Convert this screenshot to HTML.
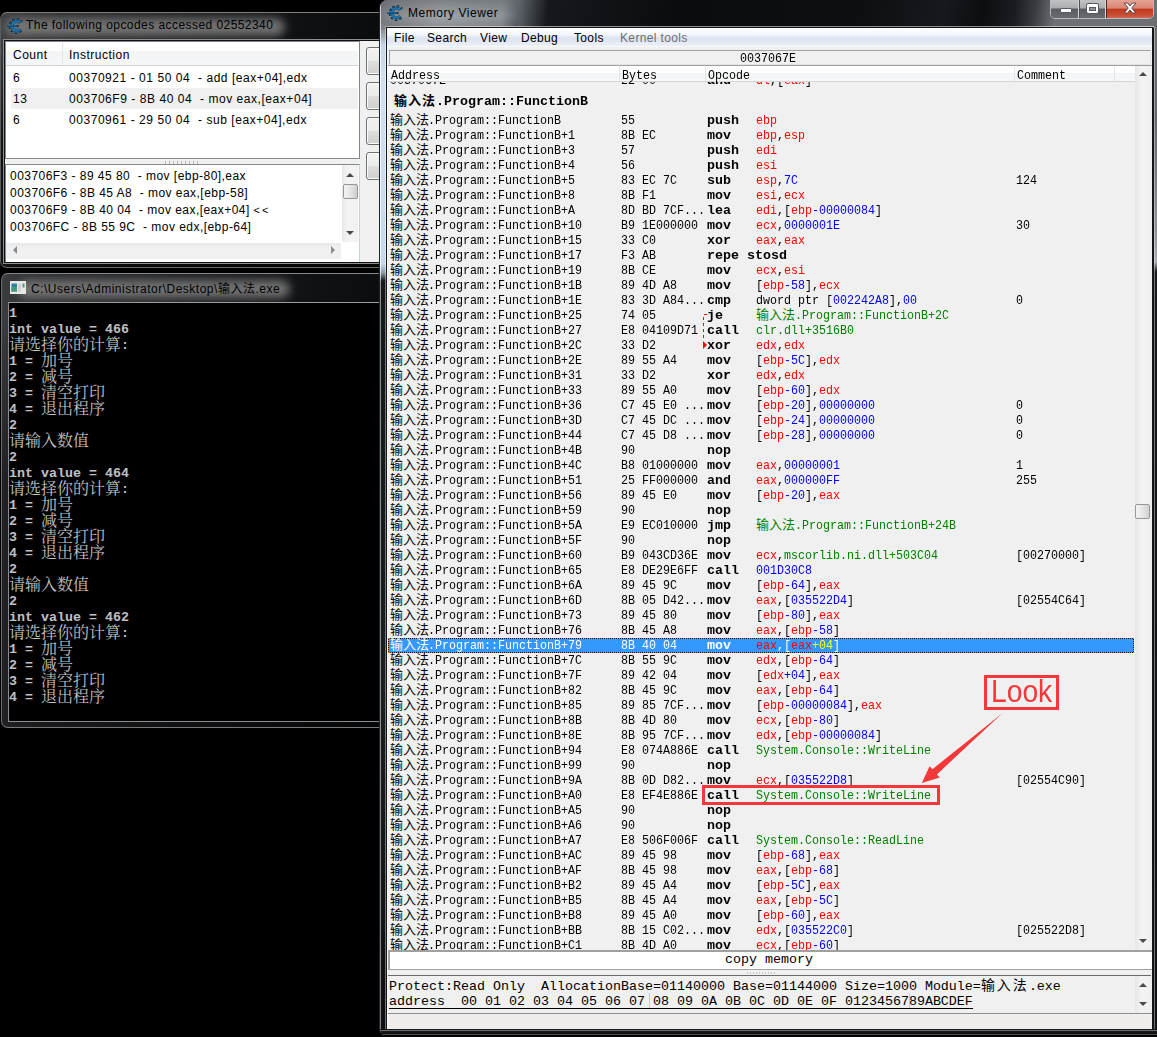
<!DOCTYPE html>
<html lang="zh">
<head>
<meta charset="utf-8">
<title>Memory Viewer</title>
<style>
*{box-sizing:border-box;margin:0;padding:0}
html,body{width:1157px;height:1037px;overflow:hidden;background:#000}
body{position:relative;font-family:"Liberation Sans","Noto Sans CJK SC",sans-serif;font-size:12px;color:#000}
.abs{position:absolute}
/* ---------- window 1 : opcodes ---------- */
#w1{position:absolute;left:0;top:12px;width:379px;height:256px;border-radius:7px 0 0 7px;overflow:hidden;
 background:linear-gradient(rgba(0,0,0,0) 0,rgba(0,0,0,0) 30px,rgba(0,0,0,.7) 130px),linear-gradient(90deg,#3e3f42 0,#2c2d2f 40px,#101113 290px,#0b0c0e 100%);
 border-top:1px solid #7d7f81;border-left:1px solid #5a5c5f;border-bottom:1px solid #6a6c6e}
#w1 .glow{position:absolute;left:4px;top:5px;width:280px;height:18px;border-radius:9px;background:#7c7c7c;filter:blur(5px);opacity:.9}
.ttl{position:absolute;white-space:nowrap;font-size:12px;color:#000}
#w1c{position:absolute;left:3px;top:27px;width:400px;height:223px;background:#f0f0f0;border:1px solid #101114;box-shadow:0 0 0 1px #8c8e90;overflow:hidden}
.lv{position:absolute;background:#fff;border:1px solid #828790}
.lvh{position:absolute;left:1px;top:0;height:24px;background:linear-gradient(#fff 0,#fff 40%,#f3f4f6 41%,#f6f7f9 100%);border-bottom:1px solid #d5d5d5}
.t12{position:absolute;white-space:pre;font-size:12px;line-height:16px;letter-spacing:.6px}
.ls{letter-spacing:.55px}.ls2{letter-spacing:.46px}
.btn{position:absolute;left:361px;width:40px;height:28px;border:1px solid #707070;border-radius:3px;
 background:linear-gradient(#f2f2f2 0,#ebebeb 48%,#dddddd 52%,#cfcfcf 100%);box-shadow:inset 0 0 0 1px #fcfcfc}
.sb{position:absolute;background:#f0f0f0}
.arr{position:absolute;width:0;height:0}
/* ---------- window 2 : console ---------- */
#w2{position:absolute;left:1px;top:273px;width:378px;height:455px;border-radius:7px 0 0 7px;overflow:hidden;
 background:linear-gradient(rgba(0,0,0,0) 0,rgba(0,0,0,0) 40px,rgba(0,0,0,.45) 200px),linear-gradient(90deg,#3c3d40 0,#2c2d2f 40px,#111214 300px,#0c0d0f 100%);
 border-top:1px solid #85878a;border-left:1px solid #6c6e70;border-bottom:1px solid #77797b}
#w2 .glow{position:absolute;left:16px;top:6px;width:272px;height:18px;border-radius:9px;background:#7c7c7c;filter:blur(5px);opacity:.9}
#con{position:absolute;left:6px;top:28px;width:400px;height:420px;background:#000;border:1px solid #8a8c8e;border-top-color:#9a9c9e}
.cl{position:absolute;left:0;height:16px;font-family:"Liberation Mono",monospace;font-weight:bold;font-size:13.33px;line-height:16px;color:#c0c0c0;white-space:pre}
.cl .c{display:inline-block;vertical-align:top;position:relative;top:-2px;height:16px;font-family:"Noto Serif CJK SC","Noto Sans CJK SC",serif;font-weight:400;font-size:16px;line-height:16px}
/* ---------- window 3 : memory viewer ---------- */
#w3{position:absolute;left:379px;top:0;width:780px;height:1036px;border-radius:8px 0 0 7px;
 background:#15181b;border-left:1px solid #1f242a;overflow:hidden}
#w3 .tb{position:absolute;left:0;top:0;width:100%;height:28px;
 background:linear-gradient(97deg,#767a7e 0,#868a8f 14px,#a0a4a8 60px,#90969b 122px,#5a5f65 140px,#15181c 168px,#0a0c0f 300px,#0d0f12 480px,#16191d 560px,#0c0e11 600px,#1a1d21 632px,#3a3e42 652px,#6d7174 672px,#6d7174 100%)}
#w3 .tb3{position:absolute;left:6px;top:26px;width:769px;height:1px;background:linear-gradient(90deg,rgba(255,255,255,.45),rgba(255,255,255,.55) 130px,rgba(255,255,255,.5) 600px,rgba(255,255,255,.6))}
#w3 .tb2{position:absolute;left:0;top:0;width:138px;height:28px;
 background:linear-gradient(rgba(90,94,98,.5) 0,rgba(0,0,0,0) 55%,rgba(0,0,0,.12) 100%)}
#w3 .lf{position:absolute;left:0;top:0;width:7px;height:1036px;
 background:linear-gradient(rgba(0,0,0,0) 0,rgba(0,0,0,0) 22px,#8d9298 30px,#a3adb8 37px,#c3d7ea 45px,#cfe0f1 80px,#c6d9ec 264px,#8b97a3 273px,#15181b 281px,#1b1e21 700px,#0d0e10 100%)}
#w3 .lf2{position:absolute;left:0;top:4px;width:1px;height:1032px;background:linear-gradient(rgba(255,255,255,.6) 0,rgba(255,255,255,.75) 40px,rgba(255,255,255,.75) 266px,rgba(255,255,255,.5) 280px,rgba(255,255,255,.5) 100%)}
#w3 .lf3{position:absolute;left:5px;top:27px;width:1px;height:1003px;background:linear-gradient(rgba(255,255,255,.35) 0,rgba(255,255,255,.5) 20px,rgba(255,255,255,.5) 240px,rgba(255,255,255,.4) 254px,rgba(255,255,255,.4) 100%)}
#w3 .rf{position:absolute;left:774px;top:0;width:6px;height:1036px;
 background:linear-gradient(#6d7174 0,#63676b 120px,#8d9195 230px,#a9adb1 262px,#181b1e 272px,#101214 100%)}
#w3 .rf2{position:absolute;left:774px;top:27px;width:1px;height:1003px;background:rgba(255,255,255,.4)}
#w3 .bf{position:absolute;left:0;top:1029px;width:780px;height:7px;background:linear-gradient(#101214 0,#101214 1px,#6a6c6e 1px,#6a6c6e 2px,#1a1c1e 2px,#0c0d0e 5px,#4a4c4e 5px,#4a4c4e 6px,#000 6px)}
#mv{position:absolute;left:7px;top:28px;width:765px;height:1001px;background:#f0f0f0}
#menu{position:absolute;left:0;top:0;width:765px;height:19px;background:linear-gradient(#fff 0,#f4f6fb 35%,#dde3f1 55%,#e4e8f4 80%,#eef1f8 100%);border-bottom:1px solid #f8f9fc}
#menu span{position:absolute;top:2px;font-size:12px;line-height:16px;letter-spacing:.35px;white-space:nowrap}
.mono{position:absolute;font-family:"Liberation Mono",monospace;font-size:13px;line-height:15px;white-space:pre;transform:scaleX(.8974);transform-origin:0 0}
#dis{position:absolute;left:1px;top:54px;width:747px;height:868px;overflow:hidden;background:#f0f0f0}
.row{position:absolute;left:0;width:745px;height:15px;color:#000}
.l{position:absolute;top:1px;font-family:"Liberation Mono",monospace;font-size:13px;line-height:15px;white-space:pre;transform:scaleX(.8974);transform-origin:0 0}
b.l{transform:scaleX(1.0256)}
.cj{position:absolute;top:-1px;font-family:"Noto Sans CJK SC","Noto Serif CJK SC",sans-serif;font-size:13px;line-height:15px;white-space:pre}
.by{left:233px}.op{left:319px}.opr{left:368px}.com{left:628px}
.r{color:#f00}.h{color:#00f}.g{color:#008000}
.sel{color:#fff}
.selbg{position:absolute;left:0;top:556px;width:746px;height:15px;background:#111}
.selbg i{position:absolute;left:0;top:0;width:746px;height:15px;background:#3399ff;background-clip:padding-box;border:1px dotted #f0860e}
.sel .h{color:#ff0}
#hex{position:absolute;left:1px;top:947px;width:763px;height:39px;background:#f0f0f0;border-top:1px solid #696969}
.cn{font-family:"Liberation Mono","Noto Sans CJK SC",monospace;font-size:13.33px;line-height:15px;white-space:pre;position:absolute;letter-spacing:0}
</style>
</head>
<body>

<!-- ================= opcodes window ================= -->
<div id="w1">
  <div class="glow"></div>
  <svg class="abs" style="left:6px;top:4px" width="17" height="18" viewBox="0 0 17 18"><path d="M14.56 5.12A6.30 6.30 0 1 0 14.56 12.88" fill="none" stroke="#04101a" stroke-width="3" stroke-dasharray="2.1 1.9" stroke-dashoffset="0.7"/><path d="M14.56 5.12A6.30 6.30 0 1 0 14.56 12.88" fill="none" stroke="#1878b8" stroke-width="1.6" stroke-dasharray="1.5 2.5" stroke-dashoffset="0.4"/><path d="M13.20 5.98A4.70 4.70 0 1 0 13.20 12.02" fill="none" stroke="#04101a" stroke-width="3" opacity=".5"/><path d="M13.20 5.98A4.70 4.70 0 1 0 13.20 12.02" fill="none" stroke="#1878b8" stroke-width="2.1"/><path d="M0.4 9H11.4" stroke="#04101a" stroke-width="1.9" opacity=".85"/><path d="M0.6 8.9H10" stroke="#1878b8" stroke-width="1.3"/></svg>
  <div class="ttl" style="left:25px;top:5px;letter-spacing:.44px">The following opcodes accessed 02552340</div>
  <div id="w1c">
    <div class="lv" style="left:0;top:0;width:355px;height:118px">
      <div class="lvh" style="left:0;width:352px"></div>
      <div class="abs" style="left:56px;top:1px;width:1px;height:22px;background:#e2e3e5"></div>
      <div class="t12" style="left:7px;top:5px;letter-spacing:.5px">Count</div>
      <div class="t12" style="left:63px;top:5px;letter-spacing:.5px">Instruction</div>
      <div class="abs" style="left:5px;top:46px;width:347px;height:21px;background:#f0f0f0"></div>
      <div class="t12" style="left:7px;top:28px">6</div>
      <div class="t12 ls" style="left:63px;top:28px">00370921 - 01 50 04&nbsp; - add [eax+04],edx</div>
      <div class="t12" style="left:7px;top:49px">13</div>
      <div class="t12 ls" style="left:63px;top:49px">003706F9 - 8B 40 04&nbsp; - mov eax,[eax+04]</div>
      <div class="t12" style="left:7px;top:70px">6</div>
      <div class="t12 ls" style="left:63px;top:70px">00370961 - 29 50 04&nbsp; - sub [eax+04],edx</div>
    </div>
    <div class="abs" style="left:160px;top:120px;width:34px;height:3px;background:repeating-linear-gradient(90deg,#b8b8b8 0,#b8b8b8 1px,#f0f0f0 1px,#f0f0f0 4px)"></div>
    <div class="lv" style="left:0;top:123px;width:355px;height:110px;border-color:#828790 #c5d0e0 #828790 #828790">
      <div class="t12 ls2" style="left:4px;top:3px">003706F3 - 89 45 80&nbsp; - mov [ebp-80],eax</div>
      <div class="t12 ls2" style="left:4px;top:20px">003706F6 - 8B 45 A8&nbsp; - mov eax,[ebp-58]</div>
      <div class="t12 ls2" style="left:4px;top:37px">003706F9 - 8B 40 04&nbsp; - mov eax,[eax+04] <span style="letter-spacing:2px;font-size:11px">&lt;&lt;</span></div>
      <div class="t12 ls2" style="left:4px;top:54px">003706FC - 8B 55 9C&nbsp; - mov edx,[ebp-64]</div>
      <!-- v scrollbar -->
      <div class="sb" style="left:336px;top:0;width:16px;height:77px;background:linear-gradient(90deg,#e8e8e8,#f4f4f4 40%,#f0f0f0)"></div>
      <div class="arr" style="left:340px;top:8px;border-left:4px solid transparent;border-right:4px solid transparent;border-bottom:4px solid #4a4a4a"></div>
      <div class="abs" style="left:337px;top:19px;width:15px;height:15px;border:1px solid #979797;border-radius:2px;background:linear-gradient(90deg,#f4f4f4,#e4e4e4 50%,#cfcfcf)"></div>
      <div class="arr" style="left:340px;top:66px;border-left:4px solid transparent;border-right:4px solid transparent;border-top:4px solid #4a4a4a"></div>
      <!-- h scrollbar -->
      <div class="sb" style="left:0;top:78px;width:335px;height:16px;background:linear-gradient(#e9e9e9,#f1f1f1 40%,#efefef)"></div>
      <div class="arr" style="left:7px;top:81px;border-top:4px solid transparent;border-bottom:4px solid transparent;border-right:4px solid #8a8a8a"></div>
      <div class="arr" style="left:325px;top:81px;border-top:4px solid transparent;border-bottom:4px solid transparent;border-left:4px solid #8a8a8a"></div>
    </div>
    <div class="btn" style="top:6px"></div>
    <div class="btn" style="top:41px"></div>
    <div class="btn" style="top:76px"></div>
    <div class="btn" style="top:111px"></div>
  </div>
</div>

<!-- ================= console window ================= -->
<div id="w2">
  <div class="glow"></div>
  <svg class="abs" style="left:8px;top:7px" width="16" height="13" viewBox="0 0 16 13"><rect x="0" y="0" width="16" height="13" fill="#e8e8e8"/><rect x="1.5" y="2.5" width="5.5" height="8" fill="#2f7fa0"/><rect x="1.5" y="6" width="5.5" height="4.5" fill="#3f9a78"/><rect x="8" y="2.5" width="3" height="8" fill="#d0d0d0"/><rect x="12.5" y="2.5" width="2" height="4" fill="#49a06a"/></svg>
  <div class="ttl" style="left:29px;top:5px;letter-spacing:.5px">C:\Users\Administrator\Desktop\输入法.exe</div>
  <div id="con">
<div class="cl" style="top:3px">1</div>
<div class="cl" style="top:19px">int value = 466</div>
<div class="cl" style="top:35px"><span class="c">请选择你的计算</span>:</div>
<div class="cl" style="top:51px">1 = <span class="c">加号</span></div>
<div class="cl" style="top:67px">2 = <span class="c">减号</span></div>
<div class="cl" style="top:83px">3 = <span class="c">清空打印</span></div>
<div class="cl" style="top:99px">4 = <span class="c">退出程序</span></div>
<div class="cl" style="top:115px">2</div>
<div class="cl" style="top:131px"><span class="c">请输入数值</span></div>
<div class="cl" style="top:147px">2</div>
<div class="cl" style="top:163px">int value = 464</div>
<div class="cl" style="top:179px"><span class="c">请选择你的计算</span>:</div>
<div class="cl" style="top:195px">1 = <span class="c">加号</span></div>
<div class="cl" style="top:211px">2 = <span class="c">减号</span></div>
<div class="cl" style="top:227px">3 = <span class="c">清空打印</span></div>
<div class="cl" style="top:243px">4 = <span class="c">退出程序</span></div>
<div class="cl" style="top:259px">2</div>
<div class="cl" style="top:275px"><span class="c">请输入数值</span></div>
<div class="cl" style="top:291px">2</div>
<div class="cl" style="top:307px">int value = 462</div>
<div class="cl" style="top:323px"><span class="c">请选择你的计算</span>:</div>
<div class="cl" style="top:339px">1 = <span class="c">加号</span></div>
<div class="cl" style="top:355px">2 = <span class="c">减号</span></div>
<div class="cl" style="top:371px">3 = <span class="c">清空打印</span></div>
<div class="cl" style="top:387px">4 = <span class="c">退出程序</span></div>
</div>
</div>

<!-- ================= memory viewer ================= -->
<div id="w3">
  <div class="tb"></div><div class="tb2"></div><div class="tb3"></div>
  <div class="lf"></div><div class="lf2"></div><div class="lf3"></div><div class="rf"></div><div class="rf2"></div><div class="bf"></div>
  <svg class="abs" style="left:7px;top:4px" width="17" height="18" viewBox="0 0 17 18"><path d="M14.56 5.12A6.30 6.30 0 1 0 14.56 12.88" fill="none" stroke="#04101a" stroke-width="3" stroke-dasharray="2.1 1.9" stroke-dashoffset="0.7"/><path d="M14.56 5.12A6.30 6.30 0 1 0 14.56 12.88" fill="none" stroke="#1878b8" stroke-width="1.6" stroke-dasharray="1.5 2.5" stroke-dashoffset="0.4"/><path d="M13.20 5.98A4.70 4.70 0 1 0 13.20 12.02" fill="none" stroke="#04101a" stroke-width="3" opacity=".5"/><path d="M13.20 5.98A4.70 4.70 0 1 0 13.20 12.02" fill="none" stroke="#1878b8" stroke-width="2.1"/><path d="M0.4 9H11.4" stroke="#04101a" stroke-width="1.9" opacity=".85"/><path d="M0.6 8.9H10" stroke="#1878b8" stroke-width="1.3"/></svg>
  <div class="ttl" style="left:28px;top:6px;letter-spacing:.55px">Memory Viewer</div>
  <!-- caption buttons -->
  <div class="abs" style="left:670px;top:-2px;width:104px;height:21px;border:1px solid #b9bcbf;border-radius:0 0 5px 5px;overflow:hidden;background:#555">
    <div class="abs" style="left:0;top:0;width:28px;height:20px;background:linear-gradient(#c3c6c8 0,#a9adb0 45%,#595d61 50%,#6a6e72 100%);border-right:1px solid #d4d6d8"></div>
    <div class="abs" style="left:28px;top:0;width:27px;height:20px;background:linear-gradient(#c3c6c8 0,#a9adb0 45%,#595d61 50%,#6a6e72 100%);border-right:1px solid #d4d6d8;border-left:1px solid #4c4f52"></div>
    <div class="abs" style="left:55px;top:0;width:48px;height:20px;background:linear-gradient(#e8a79b 0,#d98573 45%,#c1391d 52%,#c9513a 85%,#d8796a 100%);border-left:1px solid #5a2018"></div>
    <div class="abs" style="left:9px;top:9px;width:12px;height:5px;background:#fff;border:1px solid #555b61;border-radius:1px"></div>
    <div class="abs" style="left:36px;top:5px;width:11px;height:9px;border:2px solid #fff;border-top-width:3px;outline:1px solid #555b61;border-radius:1px;background:#8e9296;box-shadow:inset 0 0 0 1px #555b61"></div>
    <svg class="abs" style="left:72px;top:3px" width="14" height="12" viewBox="0 0 14 12"><path d="M1.2 1H4.6L7 4 9.4 1H12.8L8.8 6 12.8 11H9.4L7 8 4.6 11H1.2L5.2 6Z" fill="#fff" stroke="#5a4a4c" stroke-width="1"/></svg>
  </div>
  <div id="mv">
    <div class="abs" style="left:-1px;top:-1px;width:767px;height:1003px;border:1px solid #141516"></div>
    <div class="abs" style="left:0;top:19px;width:1px;height:982px;background:#fafafa"></div>
    <div id="menu">
      <span style="left:7px">File</span><span style="left:40px">Search</span><span style="left:93px">View</span><span style="left:134px">Debug</span><span style="left:187px">Tools</span><span style="left:233px;color:#6d6d6d">Kernel tools</span>
    </div>
    <!-- address box -->
    <div class="abs" style="left:2px;top:22px;width:762px;height:15px;border:1px solid #a0a0a0;border-bottom-color:#e3e3e3;border-right-color:#e3e3e3;background:#f0f0f0"></div>
    <div class="mono" style="left:353px;top:23px;line-height:15px">0037067E</div>
    <div class="abs" style="left:1px;top:37px;width:764px;height:1px;background:#a0a0a0"></div>
    <!-- list header -->
    <div class="abs" style="left:1px;top:38px;width:747px;height:16px;background:linear-gradient(#fff 0,#fff 45%,#f3f4f6 50%,#f7f8fa 100%);border-bottom:1px solid #d5d5d5"></div>
    <div class="abs" style="left:232px;top:39px;width:1px;height:14px;background:#e2e3e5"></div>
    <div class="abs" style="left:318px;top:39px;width:1px;height:14px;background:#e2e3e5"></div>
    <div class="abs" style="left:627px;top:39px;width:1px;height:14px;background:#e2e3e5"></div>
    <div class="abs" style="left:727px;top:39px;width:1px;height:14px;background:#e2e3e5"></div>
    <div class="mono" style="left:4px;top:40px;line-height:15px">Address</div>
    <div class="mono" style="left:235px;top:40px;line-height:15px">Bytes</div>
    <div class="mono" style="left:321px;top:40px;line-height:15px">Opcode</div>
    <div class="mono" style="left:630px;top:40px;line-height:15px">Comment</div>
    <!-- v scrollbar -->
    <div class="abs" style="left:748px;top:38px;width:16px;height:884px;background:linear-gradient(90deg,#e6e6e6,#f3f3f3 40%,#efefef)"></div>
    <div class="arr" style="left:752px;top:44px;border-left:4px solid transparent;border-right:4px solid transparent;border-bottom:4px solid #4a4a4a"></div>
    <div class="arr" style="left:752px;top:911px;border-left:4px solid transparent;border-right:4px solid transparent;border-top:4px solid #4a4a4a"></div>
    <div class="abs" style="left:748px;top:476px;width:15px;height:15px;border:1px solid #979797;border-radius:2px;background:linear-gradient(90deg,#f4f4f4,#e6e6e6 50%,#d2d2d2)"></div>
    <!-- disassembly -->
    <div id="dis">
      <div class="selbg"><i></i></div>
      <div class="row" style="top:-10px"><span class="l" style="left:2px">0037067E</span><span class="l by">22 00</span><b class="l op">and</b><span class="l opr"><span class="r">dl</span>,[<span class="r">eax</span>]</span></div>
      <div class="row" style="top:11px"><b class="cj" style="left:6px;font-weight:bold;letter-spacing:1px">输入法</b><b class="l" style="left:48px">.Program::FunctionB</b></div>
<div class="row" style="top:30px"><span class="cj" style="left:2px">输入法</span><span class="l" style="left:40px">.Program::FunctionB</span><span class="l by">55</span><b class="l op">push</b><span class="l opr"><span class="r">ebp</span></span></div>
<div class="row" style="top:45px"><span class="cj" style="left:2px">输入法</span><span class="l" style="left:40px">.Program::FunctionB+1</span><span class="l by">8B EC</span><b class="l op">mov</b><span class="l opr"><span class="r">ebp</span>,<span class="r">esp</span></span></div>
<div class="row" style="top:60px"><span class="cj" style="left:2px">输入法</span><span class="l" style="left:40px">.Program::FunctionB+3</span><span class="l by">57</span><b class="l op">push</b><span class="l opr"><span class="r">edi</span></span></div>
<div class="row" style="top:75px"><span class="cj" style="left:2px">输入法</span><span class="l" style="left:40px">.Program::FunctionB+4</span><span class="l by">56</span><b class="l op">push</b><span class="l opr"><span class="r">esi</span></span></div>
<div class="row" style="top:90px"><span class="cj" style="left:2px">输入法</span><span class="l" style="left:40px">.Program::FunctionB+5</span><span class="l by">83 EC 7C</span><b class="l op">sub</b><span class="l opr"><span class="r">esp</span>,<span class="h">7C</span></span><span class="l com">124</span></div>
<div class="row" style="top:105px"><span class="cj" style="left:2px">输入法</span><span class="l" style="left:40px">.Program::FunctionB+8</span><span class="l by">8B F1</span><b class="l op">mov</b><span class="l opr"><span class="r">esi</span>,<span class="r">ecx</span></span></div>
<div class="row" style="top:120px"><span class="cj" style="left:2px">输入法</span><span class="l" style="left:40px">.Program::FunctionB+A</span><span class="l by">8D BD 7CF...</span><b class="l op">lea</b><span class="l opr"><span class="r">edi</span>,[<span class="r">ebp</span><span class="h">-</span><span class="h">00000084</span>]</span></div>
<div class="row" style="top:135px"><span class="cj" style="left:2px">输入法</span><span class="l" style="left:40px">.Program::FunctionB+10</span><span class="l by">B9 1E000000</span><b class="l op">mov</b><span class="l opr"><span class="r">ecx</span>,<span class="h">0000001E</span></span><span class="l com">30</span></div>
<div class="row" style="top:150px"><span class="cj" style="left:2px">输入法</span><span class="l" style="left:40px">.Program::FunctionB+15</span><span class="l by">33 C0</span><b class="l op">xor</b><span class="l opr"><span class="r">eax</span>,<span class="r">eax</span></span></div>
<div class="row" style="top:165px"><span class="cj" style="left:2px">输入法</span><span class="l" style="left:40px">.Program::FunctionB+17</span><span class="l by">F3 AB</span><b class="l op">repe stosd</b></div>
<div class="row" style="top:180px"><span class="cj" style="left:2px">输入法</span><span class="l" style="left:40px">.Program::FunctionB+19</span><span class="l by">8B CE</span><b class="l op">mov</b><span class="l opr"><span class="r">ecx</span>,<span class="r">esi</span></span></div>
<div class="row" style="top:195px"><span class="cj" style="left:2px">输入法</span><span class="l" style="left:40px">.Program::FunctionB+1B</span><span class="l by">89 4D A8</span><b class="l op">mov</b><span class="l opr">[<span class="r">ebp</span><span class="h">-</span><span class="h">58</span>],<span class="r">ecx</span></span></div>
<div class="row" style="top:210px"><span class="cj" style="left:2px">输入法</span><span class="l" style="left:40px">.Program::FunctionB+1E</span><span class="l by">83 3D A84...</span><b class="l op">cmp</b><span class="l opr">dword ptr [<span class="h">002242A8</span>],<span class="h">00</span></span><span class="l com">0</span></div>
<div class="row" style="top:225px"><span class="cj" style="left:2px">输入法</span><span class="l" style="left:40px">.Program::FunctionB+25</span><span class="l by">74 05</span><b class="l op">je</b><span class="cj g" style="left:368px">输入法</span><span class="l g" style="left:407px">.Program::FunctionB+2C</span></div>
<div class="row" style="top:240px"><span class="cj" style="left:2px">输入法</span><span class="l" style="left:40px">.Program::FunctionB+27</span><span class="l by">E8 04109D71</span><b class="l op">call</b><span class="l opr"><span class="g">clr.dll+3516B0</span></span></div>
<div class="row" style="top:255px"><span class="cj" style="left:2px">输入法</span><span class="l" style="left:40px">.Program::FunctionB+2C</span><span class="l by">33 D2</span><b class="l op">xor</b><span class="l opr"><span class="r">edx</span>,<span class="r">edx</span></span></div>
<div class="row" style="top:270px"><span class="cj" style="left:2px">输入法</span><span class="l" style="left:40px">.Program::FunctionB+2E</span><span class="l by">89 55 A4</span><b class="l op">mov</b><span class="l opr">[<span class="r">ebp</span><span class="h">-</span><span class="h">5C</span>],<span class="r">edx</span></span></div>
<div class="row" style="top:285px"><span class="cj" style="left:2px">输入法</span><span class="l" style="left:40px">.Program::FunctionB+31</span><span class="l by">33 D2</span><b class="l op">xor</b><span class="l opr"><span class="r">edx</span>,<span class="r">edx</span></span></div>
<div class="row" style="top:300px"><span class="cj" style="left:2px">输入法</span><span class="l" style="left:40px">.Program::FunctionB+33</span><span class="l by">89 55 A0</span><b class="l op">mov</b><span class="l opr">[<span class="r">ebp</span><span class="h">-</span><span class="h">60</span>],<span class="r">edx</span></span></div>
<div class="row" style="top:315px"><span class="cj" style="left:2px">输入法</span><span class="l" style="left:40px">.Program::FunctionB+36</span><span class="l by">C7 45 E0 ...</span><b class="l op">mov</b><span class="l opr">[<span class="r">ebp</span><span class="h">-</span><span class="h">20</span>],<span class="h">00000000</span></span><span class="l com">0</span></div>
<div class="row" style="top:330px"><span class="cj" style="left:2px">输入法</span><span class="l" style="left:40px">.Program::FunctionB+3D</span><span class="l by">C7 45 DC ...</span><b class="l op">mov</b><span class="l opr">[<span class="r">ebp</span><span class="h">-</span><span class="h">24</span>],<span class="h">00000000</span></span><span class="l com">0</span></div>
<div class="row" style="top:345px"><span class="cj" style="left:2px">输入法</span><span class="l" style="left:40px">.Program::FunctionB+44</span><span class="l by">C7 45 D8 ...</span><b class="l op">mov</b><span class="l opr">[<span class="r">ebp</span><span class="h">-</span><span class="h">28</span>],<span class="h">00000000</span></span><span class="l com">0</span></div>
<div class="row" style="top:360px"><span class="cj" style="left:2px">输入法</span><span class="l" style="left:40px">.Program::FunctionB+4B</span><span class="l by">90</span><b class="l op">nop</b></div>
<div class="row" style="top:375px"><span class="cj" style="left:2px">输入法</span><span class="l" style="left:40px">.Program::FunctionB+4C</span><span class="l by">B8 01000000</span><b class="l op">mov</b><span class="l opr"><span class="r">eax</span>,<span class="h">00000001</span></span><span class="l com">1</span></div>
<div class="row" style="top:390px"><span class="cj" style="left:2px">输入法</span><span class="l" style="left:40px">.Program::FunctionB+51</span><span class="l by">25 FF000000</span><b class="l op">and</b><span class="l opr"><span class="r">eax</span>,<span class="h">000000FF</span></span><span class="l com">255</span></div>
<div class="row" style="top:405px"><span class="cj" style="left:2px">输入法</span><span class="l" style="left:40px">.Program::FunctionB+56</span><span class="l by">89 45 E0</span><b class="l op">mov</b><span class="l opr">[<span class="r">ebp</span><span class="h">-</span><span class="h">20</span>],<span class="r">eax</span></span></div>
<div class="row" style="top:420px"><span class="cj" style="left:2px">输入法</span><span class="l" style="left:40px">.Program::FunctionB+59</span><span class="l by">90</span><b class="l op">nop</b></div>
<div class="row" style="top:435px"><span class="cj" style="left:2px">输入法</span><span class="l" style="left:40px">.Program::FunctionB+5A</span><span class="l by">E9 EC010000</span><b class="l op">jmp</b><span class="cj g" style="left:368px">输入法</span><span class="l g" style="left:407px">.Program::FunctionB+24B</span></div>
<div class="row" style="top:450px"><span class="cj" style="left:2px">输入法</span><span class="l" style="left:40px">.Program::FunctionB+5F</span><span class="l by">90</span><b class="l op">nop</b></div>
<div class="row" style="top:465px"><span class="cj" style="left:2px">输入法</span><span class="l" style="left:40px">.Program::FunctionB+60</span><span class="l by">B9 043CD36E</span><b class="l op">mov</b><span class="l opr"><span class="r">ecx</span>,<span class="g">mscorlib.ni.dll+503C04</span></span><span class="l com">[00270000]</span></div>
<div class="row" style="top:480px"><span class="cj" style="left:2px">输入法</span><span class="l" style="left:40px">.Program::FunctionB+65</span><span class="l by">E8 DE29E6FF</span><b class="l op">call</b><span class="l opr"><span class="h">001D30C8</span></span></div>
<div class="row" style="top:495px"><span class="cj" style="left:2px">输入法</span><span class="l" style="left:40px">.Program::FunctionB+6A</span><span class="l by">89 45 9C</span><b class="l op">mov</b><span class="l opr">[<span class="r">ebp</span><span class="h">-</span><span class="h">64</span>],<span class="r">eax</span></span></div>
<div class="row" style="top:510px"><span class="cj" style="left:2px">输入法</span><span class="l" style="left:40px">.Program::FunctionB+6D</span><span class="l by">8B 05 D42...</span><b class="l op">mov</b><span class="l opr"><span class="r">eax</span>,[<span class="h">035522D4</span>]</span><span class="l com">[02554C64]</span></div>
<div class="row" style="top:525px"><span class="cj" style="left:2px">输入法</span><span class="l" style="left:40px">.Program::FunctionB+73</span><span class="l by">89 45 80</span><b class="l op">mov</b><span class="l opr">[<span class="r">ebp</span><span class="h">-</span><span class="h">80</span>],<span class="r">eax</span></span></div>
<div class="row" style="top:540px"><span class="cj" style="left:2px">输入法</span><span class="l" style="left:40px">.Program::FunctionB+76</span><span class="l by">8B 45 A8</span><b class="l op">mov</b><span class="l opr"><span class="r">eax</span>,[<span class="r">ebp</span><span class="h">-</span><span class="h">58</span>]</span></div>
<div class="row sel" style="top:555px"><span class="cj" style="left:2px">输入法</span><span class="l" style="left:40px">.Program::FunctionB+79</span><span class="l by">8B 40 04</span><b class="l op">mov</b><span class="l opr"><span class="r">eax</span>,[<span class="r">eax</span><span class="h">+</span><span class="h">04</span>]</span></div>
<div class="row" style="top:570px"><span class="cj" style="left:2px">输入法</span><span class="l" style="left:40px">.Program::FunctionB+7C</span><span class="l by">8B 55 9C</span><b class="l op">mov</b><span class="l opr"><span class="r">edx</span>,[<span class="r">ebp</span><span class="h">-</span><span class="h">64</span>]</span></div>
<div class="row" style="top:585px"><span class="cj" style="left:2px">输入法</span><span class="l" style="left:40px">.Program::FunctionB+7F</span><span class="l by">89 42 04</span><b class="l op">mov</b><span class="l opr">[<span class="r">edx</span><span class="h">+</span><span class="h">04</span>],<span class="r">eax</span></span></div>
<div class="row" style="top:600px"><span class="cj" style="left:2px">输入法</span><span class="l" style="left:40px">.Program::FunctionB+82</span><span class="l by">8B 45 9C</span><b class="l op">mov</b><span class="l opr"><span class="r">eax</span>,[<span class="r">ebp</span><span class="h">-</span><span class="h">64</span>]</span></div>
<div class="row" style="top:615px"><span class="cj" style="left:2px">输入法</span><span class="l" style="left:40px">.Program::FunctionB+85</span><span class="l by">89 85 7CF...</span><b class="l op">mov</b><span class="l opr">[<span class="r">ebp</span><span class="h">-</span><span class="h">00000084</span>],<span class="r">eax</span></span></div>
<div class="row" style="top:630px"><span class="cj" style="left:2px">输入法</span><span class="l" style="left:40px">.Program::FunctionB+8B</span><span class="l by">8B 4D 80</span><b class="l op">mov</b><span class="l opr"><span class="r">ecx</span>,[<span class="r">ebp</span><span class="h">-</span><span class="h">80</span>]</span></div>
<div class="row" style="top:645px"><span class="cj" style="left:2px">输入法</span><span class="l" style="left:40px">.Program::FunctionB+8E</span><span class="l by">8B 95 7CF...</span><b class="l op">mov</b><span class="l opr"><span class="r">edx</span>,[<span class="r">ebp</span><span class="h">-</span><span class="h">00000084</span>]</span></div>
<div class="row" style="top:660px"><span class="cj" style="left:2px">输入法</span><span class="l" style="left:40px">.Program::FunctionB+94</span><span class="l by">E8 074A886E</span><b class="l op">call</b><span class="l opr"><span class="g">System.Console::WriteLine</span></span></div>
<div class="row" style="top:675px"><span class="cj" style="left:2px">输入法</span><span class="l" style="left:40px">.Program::FunctionB+99</span><span class="l by">90</span><b class="l op">nop</b></div>
<div class="row" style="top:690px"><span class="cj" style="left:2px">输入法</span><span class="l" style="left:40px">.Program::FunctionB+9A</span><span class="l by">8B 0D D82...</span><b class="l op">mov</b><span class="l opr"><span class="r">ecx</span>,[<span class="h">035522D8</span>]</span><span class="l com">[02554C90]</span></div>
<div class="row" style="top:705px"><span class="cj" style="left:2px">输入法</span><span class="l" style="left:40px">.Program::FunctionB+A0</span><span class="l by">E8 EF4E886E</span><b class="l op">call</b><span class="l opr"><span class="g">System.Console::WriteLine</span></span></div>
<div class="row" style="top:720px"><span class="cj" style="left:2px">输入法</span><span class="l" style="left:40px">.Program::FunctionB+A5</span><span class="l by">90</span><b class="l op">nop</b></div>
<div class="row" style="top:735px"><span class="cj" style="left:2px">输入法</span><span class="l" style="left:40px">.Program::FunctionB+A6</span><span class="l by">90</span><b class="l op">nop</b></div>
<div class="row" style="top:750px"><span class="cj" style="left:2px">输入法</span><span class="l" style="left:40px">.Program::FunctionB+A7</span><span class="l by">E8 506F006F</span><b class="l op">call</b><span class="l opr"><span class="g">System.Console::ReadLine</span></span></div>
<div class="row" style="top:765px"><span class="cj" style="left:2px">输入法</span><span class="l" style="left:40px">.Program::FunctionB+AC</span><span class="l by">89 45 98</span><b class="l op">mov</b><span class="l opr">[<span class="r">ebp</span><span class="h">-</span><span class="h">68</span>],<span class="r">eax</span></span></div>
<div class="row" style="top:780px"><span class="cj" style="left:2px">输入法</span><span class="l" style="left:40px">.Program::FunctionB+AF</span><span class="l by">8B 45 98</span><b class="l op">mov</b><span class="l opr"><span class="r">eax</span>,[<span class="r">ebp</span><span class="h">-</span><span class="h">68</span>]</span></div>
<div class="row" style="top:795px"><span class="cj" style="left:2px">输入法</span><span class="l" style="left:40px">.Program::FunctionB+B2</span><span class="l by">89 45 A4</span><b class="l op">mov</b><span class="l opr">[<span class="r">ebp</span><span class="h">-</span><span class="h">5C</span>],<span class="r">eax</span></span></div>
<div class="row" style="top:810px"><span class="cj" style="left:2px">输入法</span><span class="l" style="left:40px">.Program::FunctionB+B5</span><span class="l by">8B 45 A4</span><b class="l op">mov</b><span class="l opr"><span class="r">eax</span>,[<span class="r">ebp</span><span class="h">-</span><span class="h">5C</span>]</span></div>
<div class="row" style="top:825px"><span class="cj" style="left:2px">输入法</span><span class="l" style="left:40px">.Program::FunctionB+B8</span><span class="l by">89 45 A0</span><b class="l op">mov</b><span class="l opr">[<span class="r">ebp</span><span class="h">-</span><span class="h">60</span>],<span class="r">eax</span></span></div>
<div class="row" style="top:840px"><span class="cj" style="left:2px">输入法</span><span class="l" style="left:40px">.Program::FunctionB+BB</span><span class="l by">8B 15 C02...</span><b class="l op">mov</b><span class="l opr"><span class="r">edx</span>,[<span class="h">035522C0</span>]</span><span class="l com">[025522D8]</span></div>
<div class="row" style="top:855px"><span class="cj" style="left:2px">输入法</span><span class="l" style="left:40px">.Program::FunctionB+C1</span><span class="l by">8B 4D A0</span><b class="l op">mov</b><span class="l opr"><span class="r">ecx</span>,[<span class="r">ebp</span><span class="h">-</span><span class="h">60</span>]</span></div>
      <!-- jump line -->
      <div class="abs" style="left:316px;top:232px;width:3px;height:1px;background:#f00"></div>
      <div class="abs" style="left:315px;top:235px;width:1px;height:22px;background:repeating-linear-gradient(#f00 0,#f00 3px,transparent 3px,transparent 6px)"></div>
      <div class="arr" style="left:315px;top:259px;border-top:4px solid transparent;border-bottom:4px solid transparent;border-left:4px solid #f00"></div>
    </div>
    <!-- annotation -->
    <div class="abs" style="left:315px;top:757px;width:238px;height:20px;border:3px solid #f4383a"></div>
    <div class="abs" style="left:597px;top:647px;width:75px;height:35px;border:3px solid #f4383a"></div>
    <div class="abs" style="left:604px;top:646px;font-size:31px;line-height:35px;color:#f4383a;transform:scaleX(.91);transform-origin:0 0">Look</div>
    <svg class="abs" style="left:0;top:0" width="765" height="1001" viewBox="387 28 765 1001"><path d="M1002.7 712.9L936.9 774.4 939.8 777.4 921.8 782.9 929.6 766.2 932.4 769.2Z" fill="#f4383a"/></svg>
    <!-- copy memory -->
    <div class="abs" style="left:1px;top:922px;width:764px;height:20px;background:#fff;border-top:2px solid #a0a0a0;border-left:2px solid #a0a0a0;border-bottom:1px solid #a0a0a0"></div>
    <div class="cn" style="left:338px;top:924px">copy memory</div>
    <div class="abs" style="left:360px;top:944px;width:28px;height:2px;background:repeating-linear-gradient(90deg,#c8c8c8 0,#c8c8c8 1px,#f0f0f0 1px,#f0f0f0 3px)"></div>
    <!-- hex view -->
    <div id="hex"></div>
    <div class="cn" style="left:2px;top:951px">Protect:Read Only  AllocationBase=01140000 Base=01144000 Size=1000 Module=<span style="font-size:14px;letter-spacing:2px">输入法</span>.exe</div>
    <div class="cn" style="left:2px;top:966px">address  00 01 02 03 04 05 06 07 08 09 0A 0B 0C 0D 0E 0F 0123456789ABCDEF</div>
    <div class="abs" style="left:2px;top:980px;width:584px;height:1px;background:#000"></div>
    <div class="abs" style="left:262px;top:965px;width:1px;height:15px;background:#e8e000"></div>
    <div class="abs" style="left:522px;top:965px;width:1px;height:15px;background:#e8e000"></div>
    <div class="abs" style="left:748px;top:948px;width:16px;height:37px;background:linear-gradient(90deg,#e6e6e6,#f3f3f3 40%,#efefef)"></div>
    <div class="arr" style="left:752px;top:955px;border-left:4px solid transparent;border-right:4px solid transparent;border-bottom:4px solid #4a4a4a"></div>
    <div class="arr" style="left:752px;top:974px;border-left:4px solid transparent;border-right:4px solid transparent;border-top:4px solid #4a4a4a"></div>
    <div class="abs" style="left:1px;top:985px;width:764px;height:1px;background:#8c8c8c"></div>
    <div class="abs" style="left:3px;top:987px;width:761px;height:13px;background:#f0ecec"></div>
  </div>
</div>
</body>
</html>
